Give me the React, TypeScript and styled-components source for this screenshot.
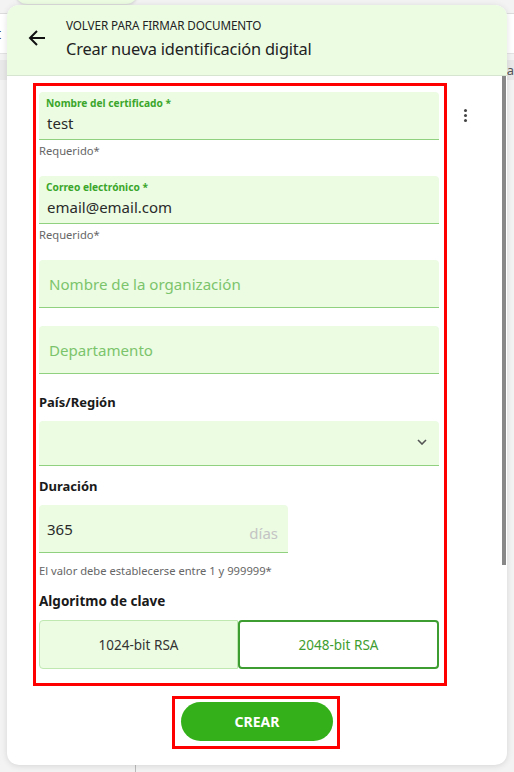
import React from 'react';
import styled, { createGlobalStyle } from 'styled-components';

const GlobalStyle = createGlobalStyle`
  html, body {
    margin: 0;
    padding: 0;
    background: #f3f3f3;
  }
  body {
    font-family: 'Noto Sans', 'Open Sans', sans-serif;
    color: #222;
  }
`;

const Page = styled.div`
  width: 514px;
  height: 772px;
  position: relative;
  overflow: hidden;
`;

/* the app behind the dialog */
const Backdrop = styled.div`
  display: flex;
  flex-direction: column;
  height: 772px;
`;

const TopPill = styled.div`
  width: 123px;
  height: 14px;
  margin: -10px 0 0 15px;
  background: #ebfce3;
  border-radius: 0 0 12px 12px;
  box-shadow: 0 1px 3px rgba(0, 0, 0, 0.15);
`;

const Toolbar = styled.div`
  margin-top: 9px;
  height: 39px;
  background: #fff;
  border-top: 1px solid #dcdcdc;
  border-bottom: 1px solid #e3e3e3;
  display: flex;
  align-items: center;
  font-size: 14px;
  color: #333;
  text-indent: -4px;
`;

const SubBar = styled.div`
  margin-top: 6px;
  height: 20px;
  background: #e9e9e9;
  display: flex;
  justify-content: flex-end;
  align-items: center;
  font-size: 13px;
  color: #555;
  overflow: hidden;
  white-space: nowrap;
`;

const BottomRule = styled.div`
  margin-top: auto;
  margin-left: 135px;
  width: 1px;
  height: 8px;
  background: #bbb;
`;

const Card = styled.div`
  position: absolute;
  left: 7px;
  top: 5px;
  width: 500px;
  height: 760px;
  background: #fff;
  border-radius: 12px;
  box-shadow: 0 1px 6px rgba(0, 0, 0, 0.12);
  display: flex;
  flex-direction: column;
  overflow: hidden;
`;

const Header = styled.div`
  height: 71px;
  flex-shrink: 0;
  background: #ebfce3;
  border-bottom: 1px solid #d5e5cf;
  display: flex;
  align-items: center;
  box-sizing: border-box;
  padding-left: 21px;
`;

const BackButton = styled.div`
  width: 18px;
  height: 18px;
  display: flex;
  margin-right: 20px;
  margin-top: -4px;
`;

const Titles = styled.div`
  display: flex;
  flex-direction: column;
  margin-top: -4px;
`;

const Overline = styled.div`
  font-size: 11.7px;
  line-height: 16px;
  color: #222;
  letter-spacing: -0.1px;
`;

const Title = styled.div`
  font-size: 16.4px;
  line-height: 22px;
  margin-top: 5px;
  color: #222;
  letter-spacing: -0.2px;
`;

const Body = styled.div`
  flex: 1;
  position: relative;
  display: flex;
  flex-direction: column;
  padding-top: 7px;
`;

const FormRow = styled.div`
  display: flex;
  align-items: flex-start;
  padding-left: 26px;
`;

const ScrollThumb = styled.div`
  position: absolute;
  right: 1px;
  top: 0;
  width: 4px;
  height: 489px;
  background: #888;
`;

const FormBox = styled.div`
  width: 414px;
  box-sizing: border-box;
  border: 3px solid #ff0000;
  padding: 6px 5px 14px 3px;
  display: flex;
  flex-direction: column;
`;

const Field = styled.div<{ $height?: number; $width?: number }>`
  height: ${p => p.$height ?? 48}px;
  width: ${p => p.$width ?? 400}px;
  box-sizing: border-box;
  background: #ebfce3;
  border-bottom: 1px solid #8fd17f;
  border-radius: 4px 4px 0 0;
  position: relative;
  display: flex;
  flex-direction: column;
  justify-content: center;
`;

const FloatLabel = styled.div`
  font-size: 10.2px;
  font-weight: 700;
  color: #3ba62b;
  padding-left: 7px;
  line-height: 14px;
  margin-top: -3px;
`;

const Value = styled.div<{ $shift?: number }>`
  font-size: 15px;
  color: #2a2a2a;
  padding-left: 8px;
  line-height: 20px;
  margin-top: ${p => p.$shift ?? 0}px;
`;

const Placeholder = styled.div`
  font-size: 15.1px;
  color: #7cc46b;
  padding-left: 10px;
  line-height: 20px;
`;

const Helper = styled.div<{ $top?: number; $gap?: number }>`
  font-size: 11.2px;
  color: #666;
  line-height: 14px;
  margin-top: ${p => p.$top ?? 4}px;
  margin-bottom: ${p => p.$gap ?? 18}px;
`;

const Spacer = styled.div<{ $h: number }>`
  height: ${p => p.$h}px;
`;

const SectionLabel = styled.div<{ $size?: number }>`
  font-size: ${p => p.$size ?? 13}px;
  font-weight: 700;
  color: #1a1a1a;
  line-height: 18px;
  margin-bottom: 10px;
`;

const Chevron = styled.div`
  position: absolute;
  right: 12px;
  top: 18px;
  display: flex;
`;

const Suffix = styled.div`
  position: absolute;
  right: 10px;
  top: 18px;
  font-size: 15px;
  color: #c4c4c4;
`;

const Segments = styled.div`
  display: flex;
  height: 49px;
  width: 400px;
`;

const Segment = styled.div<{ $active?: boolean }>`
  flex: 1;
  box-sizing: border-box;
  display: flex;
  align-items: center;
  justify-content: center;
  font-size: 13.5px;
  background: ${p => (p.$active ? '#fff' : '#ebfce3')};
  border: ${p => (p.$active ? '2px solid #3e9d30' : '1px solid #bfe8b1')};
  border-radius: ${p => (p.$active ? '4px' : '4px 0 0 4px')};
  color: ${p => (p.$active ? '#3e9d30' : '#333')};
`;

const ButtonFrame = styled.div`
  align-self: center;
  margin-top: 10px;
  margin-right: 2px;
  border: 3px solid #ff0000;
  padding: 3px 4px 5px 6px;
`;

const CreateButton = styled.button`
  width: 152px;
  height: 39px;
  border: none;
  border-radius: 20px;
  background: #34b11a;
  color: #fff;
  font-family: 'Noto Sans', sans-serif;
  font-weight: 700;
  font-size: 14px;
  display: block;
`;

const Kebab = styled.div`
  margin-left: 17px;
  margin-top: 26px;
  display: flex;
  flex-direction: column;
  gap: 2px;
  span {
    width: 3px;
    height: 3px;
    border-radius: 50%;
    background: #444;
  }
`;

export default function App() {
  return (
    <>
      <GlobalStyle />
      <Page>
        <Backdrop>
          <TopPill />
          <Toolbar>t</Toolbar>
          <SubBar>ta</SubBar>
          <BottomRule />
        </Backdrop>
        <Card>
          <Header>
            <BackButton>
              <svg width="18" height="18" viewBox="0 0 18 18">
                <path d="M17 9H2M9 2L2 9l7 7" stroke="#111" strokeWidth="2" fill="none" />
              </svg>
            </BackButton>
            <Titles>
              <Overline>VOLVER PARA FIRMAR DOCUMENTO</Overline>
              <Title>Crear nueva identificación digital</Title>
            </Titles>
          </Header>
          <Body>
            <FormRow>
              <FormBox>
                <Field>
                  <FloatLabel>Nombre del certificado *</FloatLabel>
                  <Value $shift={3}>test</Value>
                </Field>
                <Helper>Requerido*</Helper>
                <Field>
                  <FloatLabel>Correo electrónico *</FloatLabel>
                  <Value $shift={3}>email@email.com</Value>
                </Field>
                <Helper>Requerido*</Helper>
                <Field>
                  <Placeholder>Nombre de la organización</Placeholder>
                </Field>
                <Spacer $h={18} />
                <Field>
                  <Placeholder>Departamento</Placeholder>
                </Field>
                <Spacer $h={19} />
                <SectionLabel>País/Región</SectionLabel>
                <Field $height={45}>
                  <Chevron>
                    <svg width="10" height="6" viewBox="0 0 10 6">
                      <path d="M1 1l4 4 4-4" stroke="#555" strokeWidth="1.6" fill="none" />
                    </svg>
                  </Chevron>
                </Field>
                <Spacer $h={11} />
                <SectionLabel>Duración</SectionLabel>
                <Field $width={249} $height={48}>
                  <Value>365</Value>
                  <Suffix>días</Suffix>
                </Field>
                <Helper $top={11} $gap={14}>El valor debe establecerse entre 1 y 999999*</Helper>
                <SectionLabel $size={13.5}>Algoritmo de clave</SectionLabel>
                <Segments>
                  <Segment>1024-bit RSA</Segment>
                  <Segment $active>2048-bit RSA</Segment>
                </Segments>
              </FormBox>
              <Kebab>
                <span />
                <span />
                <span />
              </Kebab>
            </FormRow>
            <ButtonFrame>
              <CreateButton>CREAR</CreateButton>
            </ButtonFrame>
            <ScrollThumb />
          </Body>
        </Card>
      </Page>
    </>
  );
}
